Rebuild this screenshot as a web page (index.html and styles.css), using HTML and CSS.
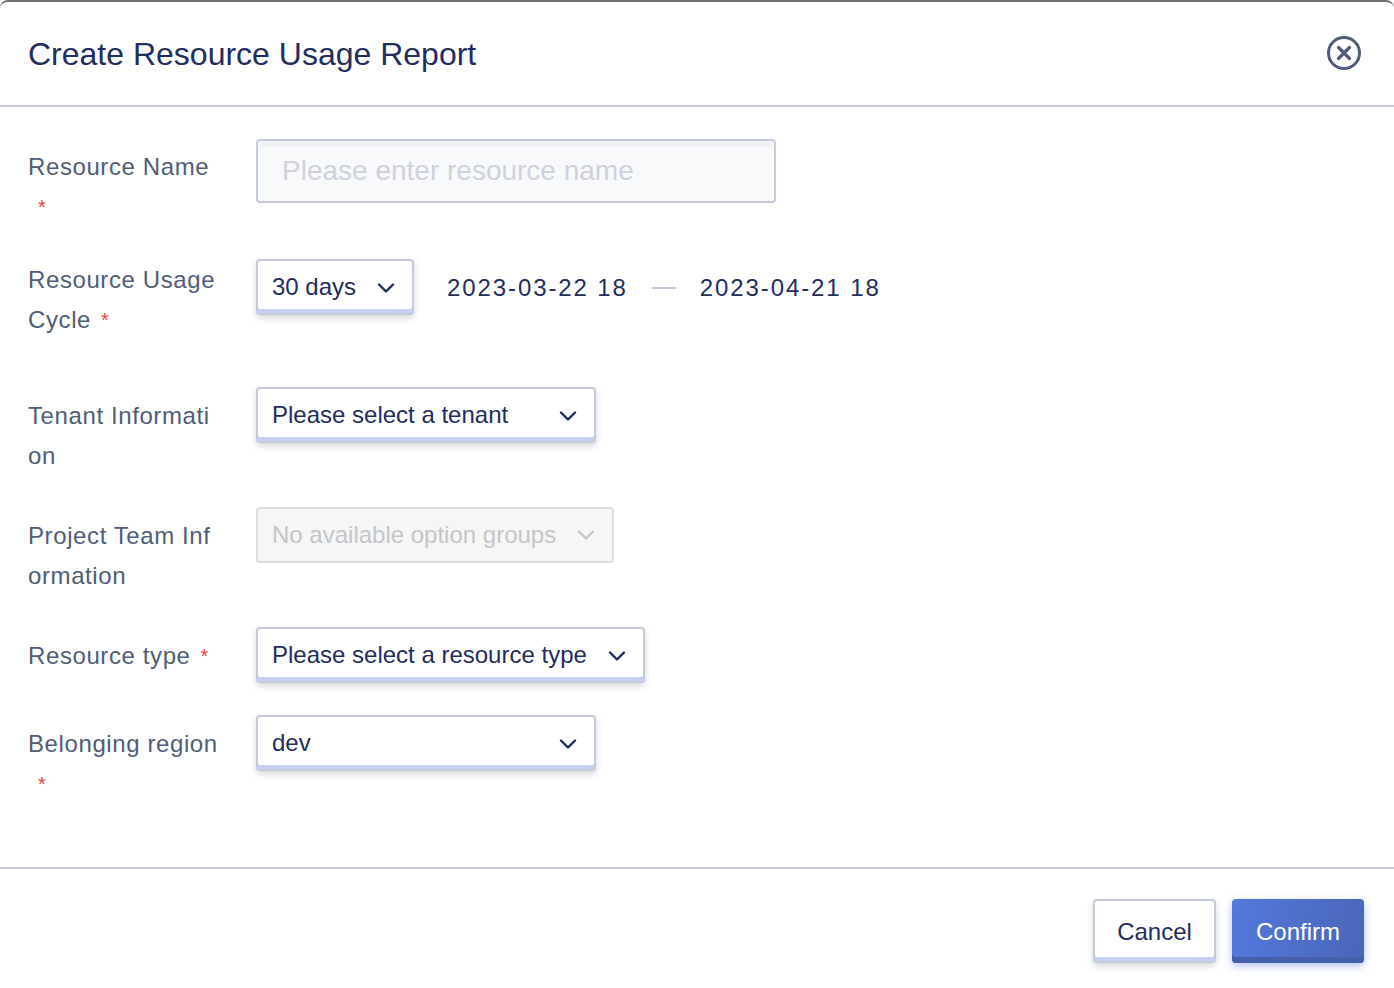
FILE: index.html
```html
<!DOCTYPE html>
<html lang="en">
<head>
    <meta charset="UTF-8">
    <title>Create Resource Usage Report</title>
    <link rel="stylesheet" href="styles.css">
</head>
<body>
    <div class="modal">
        <header class="modal-header">
            <h1>Create Resource Usage Report</h1>
            <button class="close-btn" type="button" aria-label="Close">
                <svg width="36" height="36" viewBox="0 0 36 36" fill="none" stroke="#505d78" stroke-width="3" stroke-linecap="round">
                    <circle cx="18" cy="18" r="15.5"/>
                    <path d="M12.5 12.5L23.5 23.5M23.5 12.5L12.5 23.5" stroke-width="3.2"/>
                </svg>
            </button>
        </header>

        <form class="modal-body">
            <div class="form-row form-row-name">
                <label class="form-label">Resource Name<span class="req">*</span></label>
                <input class="text-input" type="text" placeholder="Please enter resource name">
            </div>

            <div class="form-row form-row-cycle">
                <label class="form-label">Resource Usage Cycle<span class="req">*</span></label>
                <div class="select select-cycle">
                    <span>30 days</span>
                    <svg class="chevron" width="18" height="10" viewBox="0 0 18 10"><path d="M2 1.5L9 8.5L16 1.5"/></svg>
                </div>
                <div class="date-range">
                    <span>2023-03-22 18</span>
                    <i class="date-sep"></i>
                    <span>2023-04-21 18</span>
                </div>
            </div>

            <div class="form-row">
                <label class="form-label">Tenant Information</label>
                <div class="select select-md">
                    <span>Please select a tenant</span>
                    <svg class="chevron" width="18" height="10" viewBox="0 0 18 10"><path d="M2 1.5L9 8.5L16 1.5"/></svg>
                </div>
            </div>

            <div class="form-row">
                <label class="form-label">Project Team Information</label>
                <div class="select select-disabled">
                    <span>No available option groups</span>
                    <svg class="chevron" width="18" height="10" viewBox="0 0 18 10"><path d="M2 1.5L9 8.5L16 1.5"/></svg>
                </div>
            </div>

            <div class="form-row">
                <label class="form-label">Resource type<span class="req">*</span></label>
                <div class="select select-type">
                    <span>Please select a resource type</span>
                    <svg class="chevron" width="18" height="10" viewBox="0 0 18 10"><path d="M2 1.5L9 8.5L16 1.5"/></svg>
                </div>
            </div>

            <div class="form-row">
                <label class="form-label">Belonging region<span class="req">*</span></label>
                <div class="select select-md">
                    <span>dev</span>
                    <svg class="chevron" width="18" height="10" viewBox="0 0 18 10"><path d="M2 1.5L9 8.5L16 1.5"/></svg>
                </div>
            </div>
        </form>

        <footer class="modal-footer">
            <button class="btn btn-cancel" type="button">Cancel</button>
            <button class="btn btn-confirm" type="button">Confirm</button>
        </footer>
    </div>
</body>
</html>
```
FILE: styles.css
```css
* {
    box-sizing: border-box;
}
html, body {
    margin: 0;
    height: 100%;
}
body {
    font-family: "Liberation Sans", Arial, sans-serif;
    color: #1f2d5f;
    background: #fff;
}
.modal {
    height: 988px;
    border-top: 2px solid #6d6f73;
    border-radius: 8px 8px 0 0;
    background: #fff;
    display: flex;
    flex-direction: column;
    overflow: hidden;
}
.modal-header {
    height: 105px;
    flex: none;
    padding: 0 32px 0 28px;
    display: flex;
    align-items: center;
    justify-content: space-between;
    border-bottom: 2px solid #c5cadb;
}
.modal-header h1 {
    margin: 0;
    padding-top: 2px;
    font-size: 32px;
    font-weight: 400;
    color: #1f2d5f;
}
.close-btn {
    padding: 0 0 2px;
    border: none;
    background: none;
    display: flex;
}

/* form */
.modal-body {
    flex: 1;
    padding: 32px 28px 0;
}
.form-row {
    display: flex;
    align-items: flex-start;
    margin-bottom: 32px;
}
.form-row-cycle {
    min-height: 96px;
}
.form-label {
    flex: none;
    width: 228px;
    margin-bottom: -1px;
    padding: 9px 36px 0 0;
    font-size: 24px;
    line-height: 40px;
    letter-spacing: 0.6px;
    color: #505d78;
    word-break: break-all;
}
.form-row-name .form-label {
    margin-bottom: 0;
    padding-top: 8px;
}
.form-row-cycle .form-label {
    padding-top: 1px;
}
.req {
    display: inline-block;
    margin-left: 10px;
    color: #e8453c;
    font-size: 20px;
    line-height: 1;
    vertical-align: 1px;
}
.text-input {
    width: 520px;
    height: 64px;
    padding: 0 24px;
    font: 400 28px "Liberation Sans", Arial, sans-serif;
    background: #f8f9fb;
    border: 2px solid #c5cadb;
    border-radius: 4px;
    box-shadow: inset 0 6px 0 #f0f1f5;
    outline: none;
}
.text-input::placeholder {
    color: #cfd2dc;
}
.select {
    height: 56px;
    padding: 0 17px 0 14px;
    display: flex;
    align-items: center;
    justify-content: space-between;
    font-size: 24px;
    color: #1f2d5f;
    background: #fff;
    border: 2px solid #c5cadb;
    border-radius: 4px;
    box-shadow: inset 0 -4px 0 #c3d0f0, 0 3px 6px rgba(80, 93, 120, 0.25);
}
.select-cycle {
    width: 158px;
}
.select-md {
    width: 340px;
}
.select-type {
    width: 389px;
}
.select-disabled {
    width: 358px;
    color: #c4c6c9;
    background: #f6f6f6;
    border-color: #dcdddf;
    box-shadow: none;
}
.chevron {
    flex: none;
    margin-top: 2px;
    fill: none;
    stroke: #1f2d5f;
    stroke-width: 2.4;
    stroke-linecap: round;
    stroke-linejoin: round;
}
.select-disabled .chevron {
    margin-top: 0;
    stroke: #c4c6c9;
}
.date-range {
    height: 56px;
    margin-left: 33px;
    padding-top: 2px;
    display: flex;
    align-items: center;
    font-size: 24px;
    letter-spacing: 1.9px;
}
.date-sep {
    width: 24px;
    height: 2px;
    margin: 0 24px;
    background: #c5cadb;
}

/* footer */
.modal-footer {
    flex: none;
    height: 121px;
    padding: 30px 30px 0 0;
    display: flex;
    justify-content: flex-end;
    gap: 16px;
    border-top: 2px solid #c5cadb;
}
.btn {
    height: 64px;
    font-family: "Liberation Sans", Arial, sans-serif;
    font-size: 24px;
    border-radius: 4px;
    padding: 2px 0 0;
}
.btn-cancel {
    width: 123px;
    color: #1f2d5f;
    background: #fff;
    border: 2px solid #c5cadb;
    box-shadow: inset 0 -4px 0 #c3d0f0, 0 3px 6px rgba(80, 93, 120, 0.25);
}
.btn-confirm {
    width: 132px;
    color: #fff;
    border: none;
    background: linear-gradient(100deg, #5478dc, #4a66b8);
    box-shadow: inset 0 -6px 0 #4560ab, 0 3px 8px rgba(84, 120, 220, 0.45);
}
```
